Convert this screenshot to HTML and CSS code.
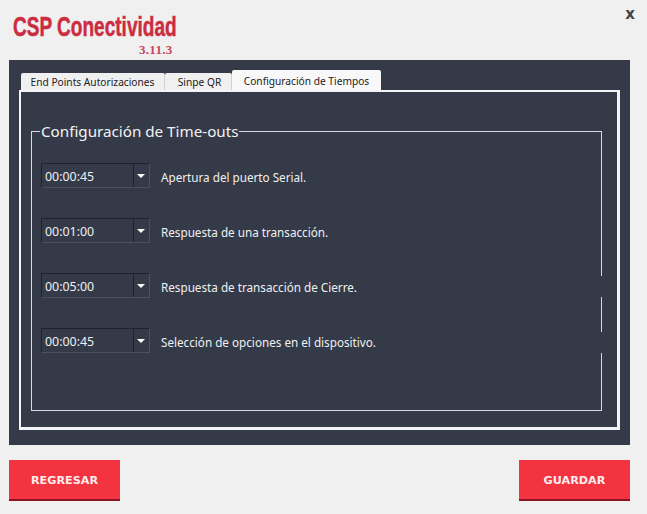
FILE: index.html
```html
<!DOCTYPE html>
<html lang="es">
  <head>
    <meta name="viewport" content="width=device-width, initial-scale=1.0" />
    <title>CSP Conectividad</title>
    <link rel="stylesheet" href="styles.css">
  </head>
  <body>
    <div class="window">
      <div class="header">
        <div class="brand">
          <div class="brand-name">CSP Conectividad</div>
          <div class="brand-version">3.11.3</div>
        </div>
        <div class="close">x</div>
      </div>
      <div class="panel">
        <div class="tabs">
          <div class="tab">End Points Autorizaciones</div>
          <div class="tab tab-small">Sinpe QR</div>
          <div class="tab active">Configuración de Tiempos</div>
        </div>
        <div class="pane">
          <fieldset class="group">
            <legend>Configuración de Time-outs</legend>
            <div class="row">
              <div class="combo"><span class="value">00:00:45</span><span class="arrow"></span></div>
              <span class="label">Apertura del puerto Serial.</span>
            </div>
            <div class="row">
              <div class="combo"><span class="value">00:01:00</span><span class="arrow"></span></div>
              <span class="label">Respuesta de una transacción.</span>
            </div>
            <div class="row">
              <div class="combo"><span class="value">00:05:00</span><span class="arrow"></span></div>
              <span class="label">Respuesta de transacción de Cierre.</span>
            </div>
            <div class="row">
              <div class="combo"><span class="value">00:00:45</span><span class="arrow"></span></div>
              <span class="label">Selección de opciones en el dispositivo.</span>
            </div>
            <span class="gap gap1"></span>
            <span class="gap gap2"></span>
          </fieldset>
        </div>
      </div>
      <div class="actions">
        <button class="btn">REGRESAR</button>
        <button class="btn">GUARDAR</button>
      </div>
    </div>
  </body>
</html>
```
FILE: styles.css
```css
* {
  padding: 0;
  margin: 0;
  box-sizing: border-box;
}
body {
  background-color: #f0f0f0;
  font-family: "Noto Sans", sans-serif;
  overflow: hidden;
}
.window {
  width: 647px;
  height: 514px;
  padding: 0 17px 0 9px;
}
.header {
  height: 60px;
  display: flex;
  justify-content: space-between;
  position: relative;
}
.brand {
  padding: 11px 0 0 4px;
}
.brand-name {
  font-family: "Liberation Sans", sans-serif;
  font-weight: bold;
  font-size: 28px;
  line-height: 32px;
  color: #cc2c40;
  -webkit-text-stroke: 0.5px #cc2c40;
  white-space: nowrap;
  transform: scaleX(0.68);
  transform-origin: left;
}
.brand-version {
  font-family: "Liberation Serif", serif;
  font-weight: bold;
  font-size: 13px;
  line-height: 14px;
  letter-spacing: 0.3px;
  color: #c8465c;
  margin-left: 126px;
}
.close {
  position: absolute;
  top: 5px;
  right: -5px;
  font-family: "DejaVu Sans", sans-serif;
  font-weight: bold;
  font-size: 15px;
  color: #444444;
}
.panel {
  height: 385px;
  background-color: #343a48;
  padding: 10px 10px 15px;
}
.tabs {
  display: flex;
  align-items: flex-end;
  height: 20px;
  padding-left: 2px;
}
.tab {
  width: 144px;
  height: 17px;
  background-color: #f0f0f0;
  border-right: 1px solid #d0d0d0;
  border-radius: 2px 2px 0 0;
  color: #222222;
  font-size: 10.2px;
  line-height: 19px;
  text-align: center;
  white-space: nowrap;
}
.tab-small {
  width: 67px;
  padding-left: 3px;
}
.tab.active {
  width: 149px;
  height: 20px;
  background-color: #f8f8f8;
  border-right: none;
  line-height: 22px;
}
.pane {
  height: 340px;
  border: solid #f4f4f6;
  border-width: 2px 3px 3px 2px;
  padding: 29px 15px 16px 10px;
}
.group {
  position: relative;
  height: 290px;
  border: 1px solid #d8dae2;
  padding: 0 0 0 9px;
}
.group legend {
  margin-left: -1px;
  padding: 0 1px;
  color: #f2f2f4;
  font-size: 15.2px;
  line-height: 20px;
}
.row {
  display: flex;
  align-items: flex-end;
  gap: 11px;
  height: 26px;
  margin-bottom: 29px;
}
.row:first-of-type {
  margin-top: 21px;
}
.combo {
  width: 109px;
  height: 25px;
  display: flex;
  border: 1px solid #1f2330;
  border-right-color: #4a5060;
  border-bottom-color: #4a5060;
}
.value {
  flex: 1;
  padding-left: 3px;
  color: #f0f0f0;
  font-size: 12.4px;
  line-height: 25px;
}
.arrow {
  width: 16px;
  border-left: 1px solid #1f2330;
  position: relative;
}
.arrow::after {
  content: "";
  position: absolute;
  top: 10px;
  left: 3px;
  border: solid transparent;
  border-width: 4px 4px 0;
  border-top-color: #ffffff;
}
.label {
  align-self: center;
  color: #f0f0f0;
  font-size: 11.7px;
  position: relative;
  top: 2px;
}
.gap {
  position: absolute;
  right: -1px;
  width: 1px;
  height: 21px;
  background-color: #343a48;
}
.gap1 {
  top: 135px;
}
.gap2 {
  top: 191px;
}
.actions {
  display: flex;
  justify-content: space-between;
  margin-top: 15px;
}
.btn {
  width: 111px;
  height: 41px;
  border: none;
  border-bottom: 2px solid #8a1420;
  padding-top: 2px;
  background-color: #f43341;
  color: #fdeeee;
  font-family: "DejaVu Sans", sans-serif;
  font-weight: bold;
  font-size: 11.2px;
}
```
